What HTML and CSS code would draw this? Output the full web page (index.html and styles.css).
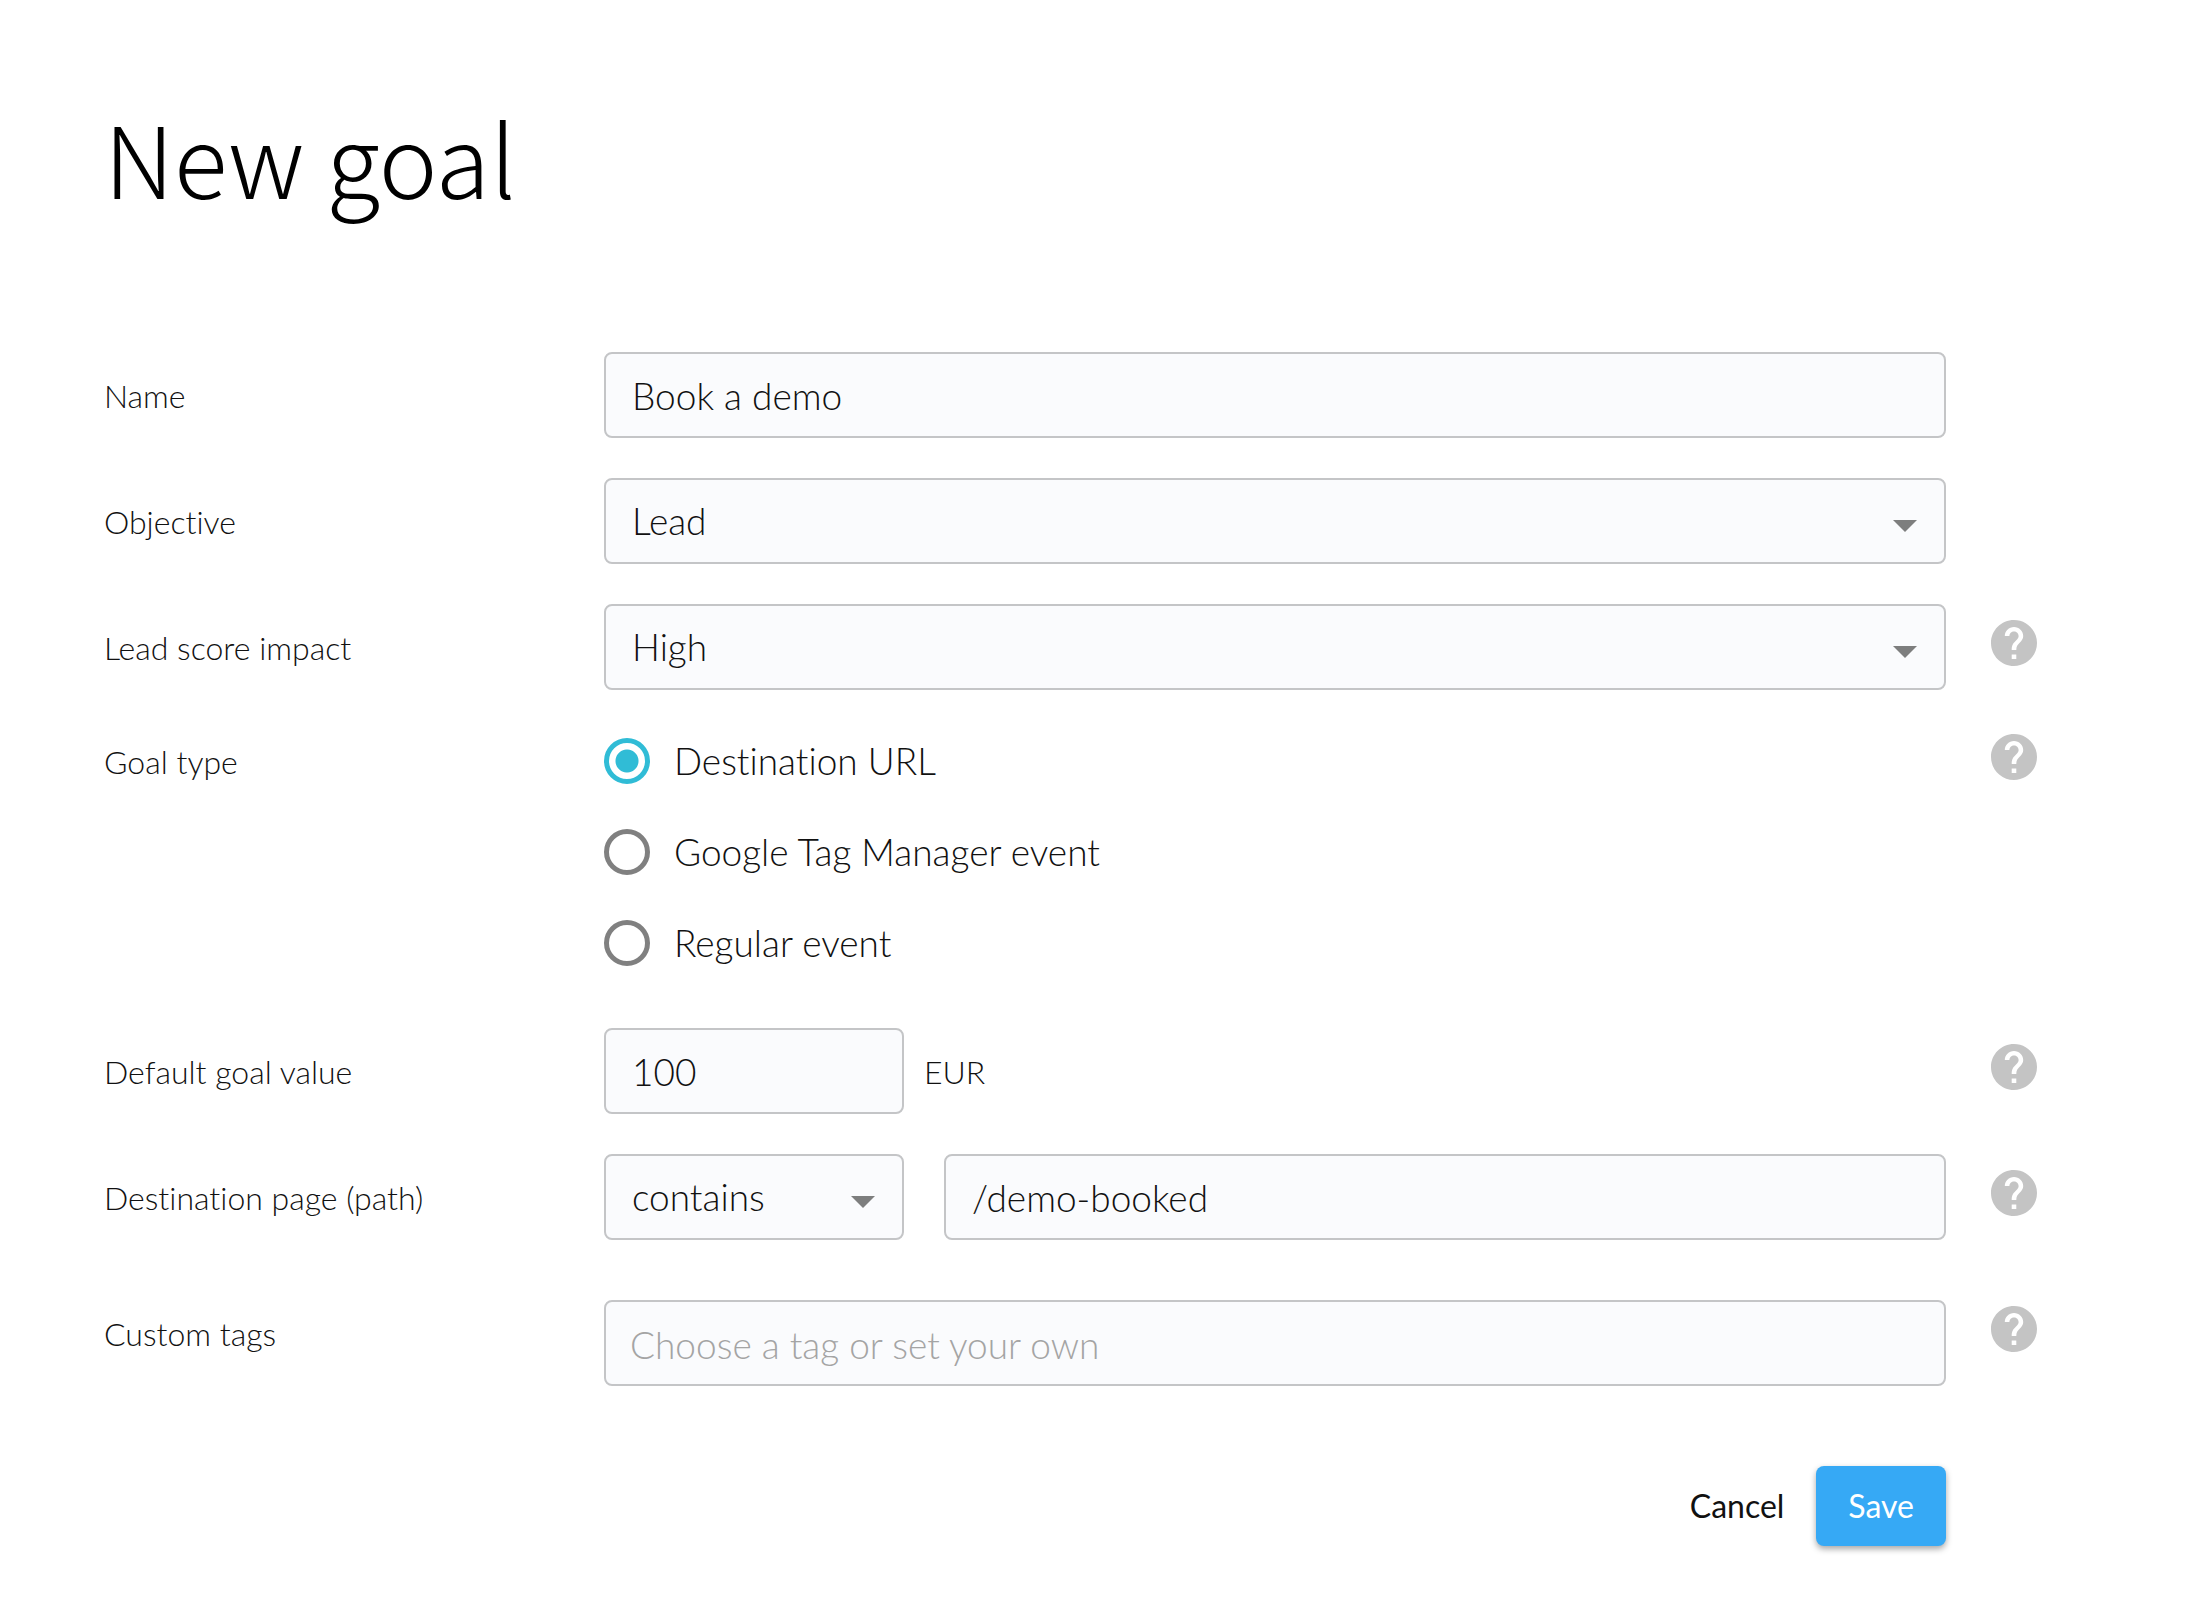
FILE: index.html
```html
<!DOCTYPE html>
<html lang="en">

<head>
    <meta charset="UTF-8">
    <meta name="viewport" content="width=device-width, initial-scale=1.0">
    <title>New goal</title>
    <link rel="stylesheet" href="styles.css">
</head>

<body>
    <!-- shared icons -->
    <svg class="icons" aria-hidden="true">
        <symbol id="help" viewBox="2 2 20 20">
            <path d="M12 2C6.48 2 2 6.48 2 12s4.48 10 10 10 10-4.48 10-10S17.52 2 12 2zm1 17h-2v-2h2v2zm2.07-7.75l-.9.92C13.45 12.9 13 13.5 13 15h-2v-.5c0-1.1.45-2.1 1.17-2.83l1.24-1.26c.37-.36.59-.86.59-1.41 0-1.1-.9-2-2-2s-2 .9-2 2H8c0-2.21 1.79-4 4-4s4 1.79 4 4c0 .88-.36 1.68-.93 2.25z"/>
        </symbol>
        <symbol id="arrow" viewBox="0 0 24 12">
            <path d="M0 0h24L12 12z"/>
        </symbol>
    </svg>

    <main class="goal">
        <h1 class="goal__title">New goal</h1>

        <form class="goal__form">
            <div class="field">
                <label class="field__label" for="name">Name</label>
                <input class="input" type="text" id="name" value="Book a demo">
            </div>

            <div class="field">
                <label class="field__label" for="objective">Objective</label>
                <div class="select">
                    <select class="input" id="objective">
                        <option>Lead</option>
                    </select>
                    <svg class="select__arrow" aria-hidden="true"><use href="#arrow"/></svg>
                </div>
            </div>

            <div class="field">
                <label class="field__label" for="impact">Lead score impact</label>
                <div class="select">
                    <select class="input" id="impact">
                        <option>High</option>
                    </select>
                    <svg class="select__arrow" aria-hidden="true"><use href="#arrow"/></svg>
                </div>
                <button class="help" type="button" aria-label="Help"><svg><use href="#help"/></svg></button>
            </div>

            <!-- goal type -->
            <div class="field field--type" role="radiogroup" aria-labelledby="type">
                <span class="field__label" id="type">Goal type</span>
                <div class="radios">
                    <label class="radio"><input type="radio" name="type" checked>Destination URL</label>
                    <label class="radio"><input type="radio" name="type">Google Tag Manager event</label>
                    <label class="radio"><input type="radio" name="type">Regular event</label>
                </div>
                <button class="help" type="button" aria-label="Help"><svg><use href="#help"/></svg></button>
            </div>

            <div class="field">
                <label class="field__label" for="value">Default goal value</label>
                <div class="value">
                    <input class="input input--short" type="text" id="value" value="100">
                    <span class="value__unit">EUR</span>
                </div>
                <button class="help" type="button" aria-label="Help"><svg><use href="#help"/></svg></button>
            </div>

            <div class="field">
                <label class="field__label" for="path">Destination page (path)</label>
                <div class="path">
                    <div class="select input--short">
                        <select class="input" aria-label="Match type">
                            <option>contains</option>
                        </select>
                        <svg class="select__arrow" aria-hidden="true"><use href="#arrow"/></svg>
                    </div>
                    <input class="input" type="text" id="path" value="/demo-booked">
                </div>
                <button class="help" type="button" aria-label="Help"><svg><use href="#help"/></svg></button>
            </div>

            <div class="field field--tags">
                <label class="field__label" for="tags">Custom tags</label>
                <input class="input" type="text" id="tags" placeholder="Choose a tag or set your own">
                <button class="help" type="button" aria-label="Help"><svg><use href="#help"/></svg></button>
            </div>

            <div class="buttons">
                <button class="btn" type="button">Cancel</button>
                <button class="btn btn--save" type="submit">Save</button>
            </div>
        </form>
    </main>
</body>

</html>
```
FILE: styles.css
```css
* {
    margin: 0;
    padding: 0;
    box-sizing: border-box;
}

body {
    background-color: #fff;
    color: #111;
    font-family: Lato, "Liberation Sans", sans-serif;
    font-size: 32px;
    font-weight: 300;
    font-variant-ligatures: none;
    line-height: 40px;
}

button,
input,
select {
    font: inherit;
    color: inherit;
}

button {
    border: 0;
    background: none;
    cursor: pointer;
}

.icons {
    display: none;
}

.goal {
    padding: 84px 149px 76px 104px;
}

.goal__title {
    color: #000;
    font-family: "Noto Sans CJK SC", "Noto Sans", sans-serif;
    font-size: 99px;
    font-weight: 300;
    line-height: 144px;
}

.goal__form {
    display: flex;
    flex-direction: column;
    gap: 40px;
    margin-top: 124px;
}

.field {
    display: grid;
    grid-template-columns: 500px 1fr 46px;
    align-items: center;
}

.field > :nth-child(2) {
    margin-right: 45px;
}

.field__label {
    padding-top: 2px;
}

.input {
    width: 100%;
    min-width: 0;
    height: 86px;
    padding: 0 26px;
    border: 2px solid #c4c5c7;
    border-radius: 8px;
    background-color: #fafbfd;
    font-size: 37px;
    line-height: 48px;
    appearance: none;
}

.field > .input {
    width: auto;
}

.input::placeholder {
    color: #a4a4a4;
    opacity: 1;
}

.input--short {
    flex: none;
    width: 300px;
}

.select {
    position: relative;
}

.select__arrow {
    position: absolute;
    top: 42px;
    right: 29px;
    width: 24px;
    height: 12px;
    fill: #7d7e7e;
    pointer-events: none;
}

.help {
    height: 46px;
    margin-bottom: 8px;
}

.help svg {
    display: block;
    width: 46px;
    height: 46px;
    fill: #c4c4c4;
}

/* radio list */
.field--type {
    align-items: start;
    margin: 4px 0 22px;
}

.field--type .field__label {
    padding-top: 8px;
}

.radios {
    display: flex;
    flex-direction: column;
    align-items: flex-start;
    gap: 45px;
    padding-top: 4px;
}

.radio {
    display: flex;
    align-items: center;
    gap: 24px;
    height: 46px;
    font-size: 37px;
}

.radio input {
    width: 46px;
    height: 46px;
    border: 5px solid #808080;
    border-radius: 50%;
    appearance: none;
}

.radio input:checked {
    border-color: #30bcd6;
    background: radial-gradient(circle, #30bcd6 11px, transparent 12px);
}

.value,
.path {
    display: flex;
    align-items: center;
    gap: 20px;
}

.path {
    gap: 40px;
}

.value__unit {
    padding-top: 2px;
}

.field--tags {
    align-items: start;
    margin-top: 20px;
}

.field--tags .input {
    padding: 2px 24px 0;
}

.field--tags .field__label {
    padding-top: 14px;
}

.field--tags .help {
    margin-top: 6px;
}

.buttons {
    display: flex;
    justify-content: flex-end;
    margin: 40px 91px 0 0;
}

.btn {
    height: 80px;
    padding: 0 32px;
    border-radius: 8px;
    font-weight: 400;
}

.btn--save {
    background-color: #36a9f5;
    color: #fff;
    box-shadow: 0 3px 6px rgba(0, 0, 0, .35);
}
```
